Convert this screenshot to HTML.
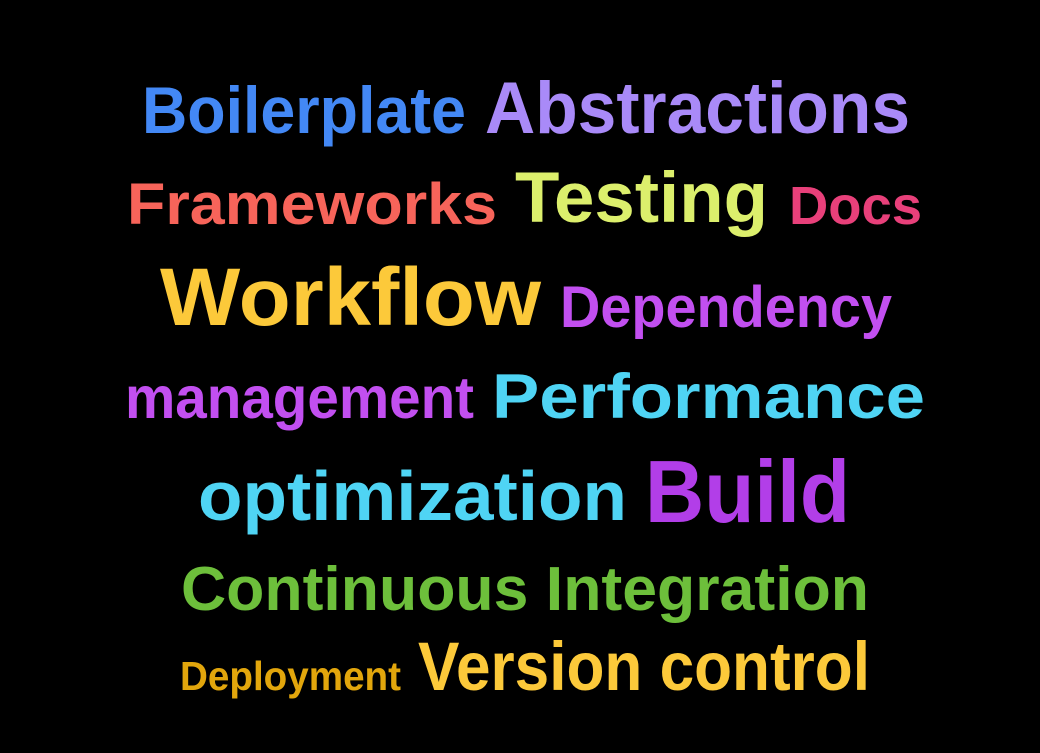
<!DOCTYPE html>
<html><head><meta charset="utf-8"><style>
html,body{margin:0;padding:0;background:#000;width:1040px;height:753px;overflow:hidden}
svg{display:block}
text{font-family:"Liberation Sans",sans-serif;font-weight:bold}
</style></head><body>
<svg width="1040" height="753" viewBox="0 0 1040 753">
<rect width="1040" height="753" fill="#000"/>
<text x="142" y="133" font-size="66" fill="#4388f5" textLength="324" lengthAdjust="spacingAndGlyphs">Boilerplate</text>
<text x="485" y="133" font-size="73" fill="#a98af8" textLength="425" lengthAdjust="spacingAndGlyphs">Abstractions</text>
<text x="127" y="224" font-size="58" fill="#f7645a" textLength="370" lengthAdjust="spacingAndGlyphs">Frameworks</text>
<text x="515" y="222" font-size="71" fill="#dcef6c" textLength="253" lengthAdjust="spacingAndGlyphs">Testing</text>
<text x="789" y="224" font-size="54" fill="#e8407a" textLength="133" lengthAdjust="spacingAndGlyphs">Docs</text>
<text x="160" y="325" font-size="82" fill="#fcc93a" textLength="381" lengthAdjust="spacingAndGlyphs">Workflow</text>
<text x="560" y="327" font-size="58" fill="#c24ff0" textLength="332" lengthAdjust="spacingAndGlyphs">Dependency</text>
<text x="125" y="418" font-size="59" fill="#c24ff0" textLength="349" lengthAdjust="spacingAndGlyphs">management</text>
<text x="492" y="418" font-size="63" fill="#4fd4f4" textLength="433" lengthAdjust="spacingAndGlyphs">Performance</text>
<text x="198" y="520" font-size="70" fill="#4fd4f4" textLength="429" lengthAdjust="spacingAndGlyphs">optimization</text>
<text x="645" y="522" font-size="88" fill="#b23ee8" textLength="205" lengthAdjust="spacingAndGlyphs">Build</text>
<text x="181" y="610" font-size="62" fill="#6dbf3b" textLength="688" lengthAdjust="spacingAndGlyphs">Continuous Integration</text>
<text x="180" y="690" font-size="41" fill="#e2a60c" textLength="221" lengthAdjust="spacingAndGlyphs">Deployment</text>
<text x="418" y="690" font-size="69" fill="#fcc93a" textLength="452" lengthAdjust="spacingAndGlyphs">Version control</text>
</svg>
</body></html>
